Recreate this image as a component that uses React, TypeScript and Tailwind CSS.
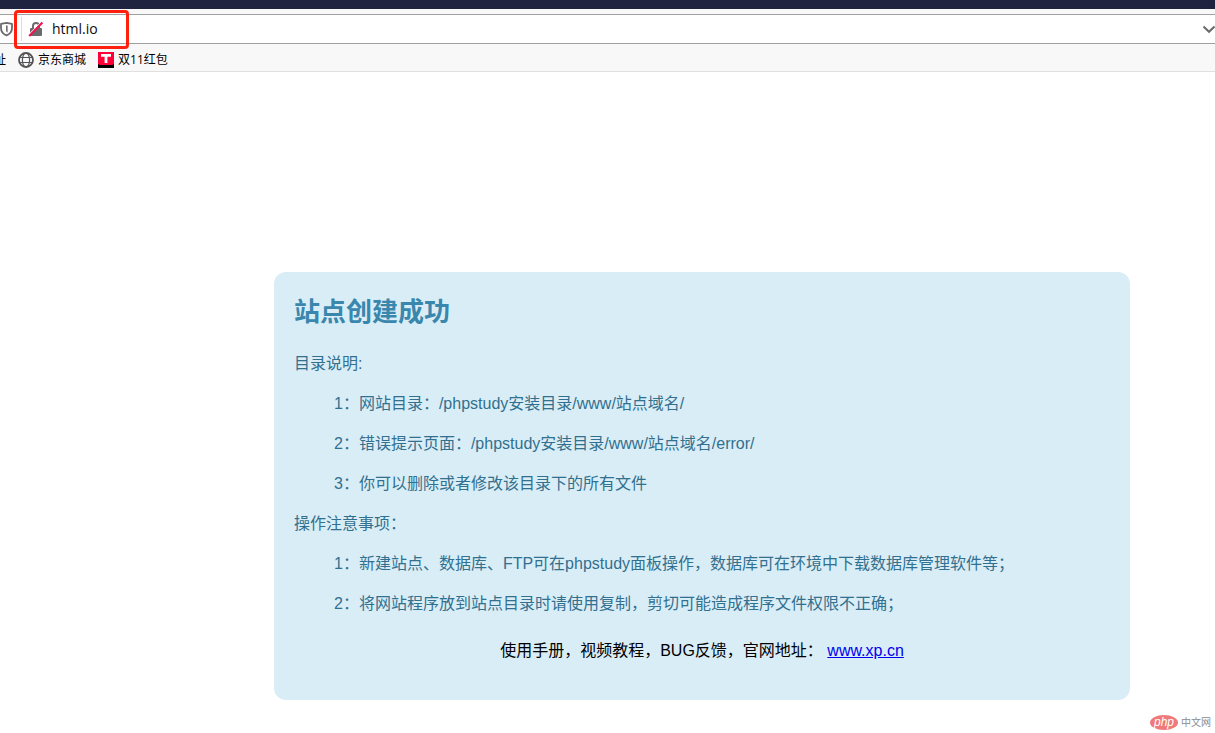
import React, { useState } from "react";

const siteNotes = [
  "1：网站目录：/phpstudy安装目录/www/站点域名/",
  "2：错误提示页面：/phpstudy安装目录/www/站点域名/error/",
  "3：你可以删除或者修改该目录下的所有文件",
];

const usageNotes = [
  "1：新建站点、数据库、FTP可在phpstudy面板操作，数据库可在环境中下载数据库管理软件等；",
  "2：将网站程序放到站点目录时请使用复制，剪切可能造成程序文件权限不正确；",
];

const ShieldIcon = () => (
  <svg width="14" height="16" viewBox="0 0 14 16" fill="none">
    <path
      d="M6.5 1.8 L12 2.9 V7 C12 10.6 10 13 6.5 14.4 C3 13 1 10.6 1 7 V2.9 Z"
      stroke="#6b6b6e"
      strokeWidth="1.8"
      strokeLinejoin="round"
    />
    <path d="M6 4.4 H7.6 V11.6 C6.4 11 6 10 6 9 Z" fill="#6b6b6e" />
  </svg>
);

const InsecureIcon = () => (
  <svg width="16" height="16" viewBox="0 0 16 16" fill="none">
    <path d="M5 8 V5 a3 3 0 0 1 6 0 V8" stroke="#6b6b6e" strokeWidth="2" />
    <rect x="2" y="7" width="12" height="8" rx="1" fill="#6b6b6e" />
    <path d="M0.6 14.2 L13.6 1" stroke="#fff" strokeWidth="1.6" />
    <path d="M1.2 15 L14.4 1.6" stroke="#f0114f" strokeWidth="2.1" />
  </svg>
);

const GlobeIcon = () => (
  <svg width="16" height="16" viewBox="0 0 16 16" fill="none" stroke="#545456" strokeWidth="1.2">
    <circle cx="8" cy="8" r="7" strokeWidth="1.8" />
    <ellipse cx="8" cy="8" rx="3.6" ry="7" />
    <path d="M1.6 5.5 H14.4 M1.6 10.5 H14.4" />
  </svg>
);

const TmallIcon = () => (
  <svg width="16" height="16" viewBox="0 0 16 16">
    <rect width="16" height="16" fill="#000" />
    <path d="M0 0 H16 V12 L14 13 H2 L0 12 Z" fill="#ff0036" />
    <path d="M3 2 H13 V4.8 H9.4 V11 H6.6 V4.8 H3 Z" fill="#fff" />
  </svg>
);

const BrowserBar = () => {
  const [url, setUrl] = useState("html.io");

  return (
    <header className="relative bg-[#f8f8f8]">
      <div className="h-[9px] bg-[#1f2340]" />
      <div className="mt-[5px] flex h-[30px] items-center border-y border-[#a0a0a0] bg-white">
        <ShieldIcon />
        <div className="ml-[7px] h-6 w-px bg-[#dcdcdc]" />
        <div className="ml-1.5">
          <InsecureIcon />
        </div>
        <input
          type="text"
          aria-label="URL"
          value={url}
          onChange={(e) => setUrl(e.target.value)}
          className="ml-2 min-w-0 flex-1 font-['Open_Sans','Noto_Sans_CJK_SC',sans-serif] text-sm text-[#0c0c0d] outline-none"
        />
        <button aria-label="History" className="-mr-px">
          <svg width="14" height="14" viewBox="0 0 14 14" fill="none">
            <path d="M1.5 4.5 L7 9.8 L12.5 4.5" stroke="#6b6b6e" strokeWidth="2" />
          </svg>
        </button>
      </div>
      <nav className="flex h-7 items-center gap-3 overflow-hidden border-b border-[#e0e0e1] pt-1 font-['Open_Sans','Noto_Sans_CJK_SC',sans-serif] text-xs whitespace-nowrap text-black">
        <a href="#" className="-ml-1.5">
          址
        </a>
        <a href="#" className="flex items-center gap-1">
          <GlobeIcon />
          京东商城
        </a>
        <a href="#" className="flex items-center gap-1">
          <TmallIcon />
          双11红包
        </a>
      </nav>
      {/* highlight around the address */}
      <div className="pointer-events-none absolute top-2.5 left-3.5 h-[39px] w-[115px] rounded-sm border-3 border-[#ff2010]" />
    </header>
  );
};

const App = () => {
  return (
    <div
      lang="zh-CN"
      className="relative min-h-screen bg-white font-['Liberation_Sans','Noto_Sans_CJK_SC',sans-serif]"
    >
      <BrowserBar />

      <main className="mt-[200px] mr-[85px] ml-[274px] rounded-xl bg-[#d9edf7] px-5 pt-5 pb-[33px] text-[#31708f]">
        <h1 className="text-[26px] leading-10 font-bold text-[#3a87ad]">站点创建成功</h1>
        <div className="mt-3 text-base leading-10">
          <p>目录说明:</p>
          <ul className="pl-10">
            {siteNotes.map((note) => (
              <li key={note}>{note}</li>
            ))}
          </ul>
          <p>操作注意事项：</p>
          <ul className="pl-10">
            {usageNotes.map((note) => (
              <li key={note}>{note}</li>
            ))}
          </ul>
        </div>
        <p className="mt-[11px] text-center text-base leading-8 text-black">
          使用手册，视频教程，BUG反馈，官网地址：{" "}
          <a href="https://www.xp.cn" className="text-[#0000ee] underline">
            www.xp.cn
          </a>
        </p>
      </main>

      <div className="absolute right-1 bottom-[3px] flex items-center gap-[3px]">
        <span className="flex h-[15px] w-7 items-center justify-center rounded-[50%] bg-[#f0797a] pb-0.5 text-xs leading-3 text-white italic">
          php
        </span>
        <span className="text-[10px] leading-3 text-[#8c8c8c]">中文网</span>
      </div>
    </div>
  );
};

export default App;
